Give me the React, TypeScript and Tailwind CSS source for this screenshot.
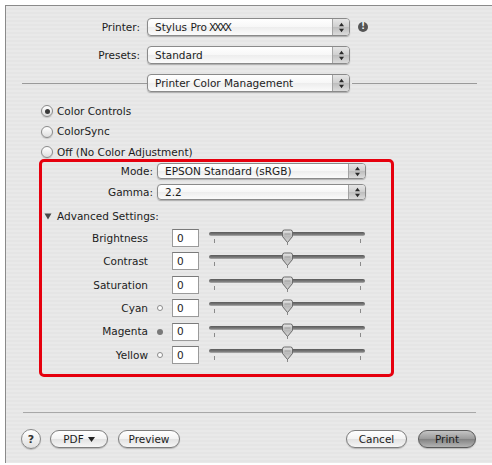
import React from "react";

function Arrows() {
  return (
    <div className="w-[17px] h-full flex items-center justify-center border-l border-[#a4a4a4] rounded-r-[3px] bg-[linear-gradient(to_bottom,#e6e6e6,#cfcfcf_50%,#bdbdbd_51%,#dcdcdc)]">
      <svg width="7" height="11" viewBox="0 0 7 11">
        <path d="M3.5 0.8 L6 4.2 H1 Z" fill="#2a2a2a" />
        <path d="M3.5 10.2 L6 6.8 H1 Z" fill="#2a2a2a" />
      </svg>
    </div>
  );
}

function Popup({ className, children }: { className: string; children: React.ReactNode }) {
  return (
    <div
      className={
        "flex items-stretch rounded-[4px] border border-[#8a8a8a] bg-[linear-gradient(to_bottom,#ffffff,#f7f7f7_50%,#ededed_51%,#fbfbfb)] shadow-[0_1px_1px_rgba(0,0,0,0.25)] " +
        className
      }
    >
      <div className="flex-1 flex items-center pl-[7px] whitespace-nowrap">{children}</div>
      <Arrows />
    </div>
  );
}

function Radio({ on }: { on?: boolean }) {
  return (
    <div className="w-[12px] h-[12px] rounded-full border border-[#8a8a8a] bg-[linear-gradient(to_bottom,#ffffff,#dedede)] shadow-[0_1px_1px_rgba(0,0,0,0.15)] flex items-center justify-center">
      {on && <div className="w-[5px] h-[5px] rounded-full bg-[#3a3a3a]" />}
    </div>
  );
}

function Slider() {
  return (
    <div className="relative w-[156px] h-[18px]">
      <div className="absolute left-0 top-[3px] w-[156px] h-[4px] rounded-full bg-[linear-gradient(to_bottom,#5a5a5a,#7a7a7a_60%,#b0b0b0)]" />
      <div className="absolute left-[5px] top-[10px] w-px h-[4px] bg-[#8a8a8a]" />
      <div className="absolute left-[151px] top-[10px] w-px h-[4px] bg-[#8a8a8a]" />
      <div className="absolute left-[78px] top-[12px] w-px h-[4px] bg-[#8a8a8a]" />
      <svg className="absolute left-[72px] top-0" width="13" height="15" viewBox="0 0 13 15">
        <defs>
          <linearGradient id="thg" x1="0" y1="0" x2="0" y2="1">
            <stop offset="0" stopColor="#e8e8e8" />
            <stop offset="0.5" stopColor="#b8b8b8" />
            <stop offset="1" stopColor="#d8d8d8" />
          </linearGradient>
        </defs>
        <path d="M1.5 3 Q1.5 1 3.5 1 H9.5 Q11.5 1 11.5 3 V7.5 L6.5 13.5 L1.5 7.5 Z" fill="url(#thg)" stroke="#6a6a6a" strokeWidth="1" />
        <path d="M3.5 5 H9.5" stroke="#9a9a9a" strokeWidth="1" />
      </svg>
    </div>
  );
}

function Dot({ kind }: { kind?: "hollow" | "filled" }) {
  if (!kind) return null;
  if (kind === "filled") return <div className="w-[6px] h-[6px] rounded-full bg-[#7a7a7a]" />;
  return <div className="w-[6px] h-[6px] rounded-full border border-[#8a8a8a] bg-white" />;
}

function SliderRow({ label, dot }: { label: string; dot?: "hollow" | "filled" }) {
  return (
    <div className="flex items-center h-[18px]">
      <div className="w-[106px] text-right">{label}</div>
      <div className="w-[24px] flex justify-center">
        <Dot kind={dot} />
      </div>
      <div className="w-[27px] h-[18px] border border-[#9a9a9a] border-t-[#7a7a7a] bg-white pl-[4px] flex items-center">0</div>
      <div className="ml-[10px]">
        <Slider />
      </div>
    </div>
  );
}

function Button({ className, children }: { className: string; children: React.ReactNode }) {
  return (
    <div
      className={
        "h-[18px] rounded-full border flex items-center justify-center shadow-[0_1px_1px_rgba(0,0,0,0.2)] " +
        className
      }
    >
      {children}
    </div>
  );
}

export default function App() {
  return (
    <div className="w-[492px] h-[465px] bg-white pt-[5px] pl-[5px] font-['DejaVu_Sans',sans-serif] text-[10.5px] text-[#1c1c1c] leading-none">
      <div className="w-[487px] h-[458px] border-t border-l border-[#8a8a8a] bg-[repeating-linear-gradient(to_bottom,#e9e9e9_0px,#e9e9e9_2px,#e5e5e5_2px,#e5e5e5_4px)] pt-[12px] flex flex-col">
        <div className="flex flex-col gap-[10px]">
          <div className="flex items-center h-[18px]">
            <div className="w-[134px] text-right">Printer:</div>
            <Popup className="ml-[7px] w-[203px] h-[18px]">
              Stylus Pro<span className="ml-[2px] tracking-[-2px]">XXXX</span>
            </Popup>
            <div className="ml-[8px] w-[10px] h-[10px] rounded-full bg-[#555] text-white text-[8px] font-bold flex items-center justify-center">!</div>
          </div>
          <div className="flex items-center h-[18px]">
            <div className="w-[134px] text-right">Presets:</div>
            <Popup className="ml-[7px] w-[203px] h-[18px]">Standard</Popup>
          </div>
          <div className="flex items-center h-[18px]">
            <div className="ml-[16px] w-[125px] h-px bg-[#9a9a9a]" />
            <Popup className="w-[203px] h-[18px]">Printer Color Management</Popup>
            <div className="ml-[2px] w-[125px] h-px bg-[#9a9a9a]" />
          </div>
        </div>

        <div className="mt-[12px] ml-[35px] flex flex-col gap-[6.5px]">
          <div className="flex items-center h-[14px]">
            <Radio on />
            <span className="ml-[4px]">Color Controls</span>
          </div>
          <div className="flex items-center h-[14px]">
            <Radio />
            <span className="ml-[4px]">ColorSync</span>
          </div>
          <div className="flex items-center h-[14px]">
            <Radio />
            <span className="ml-[4px]">Off (No Color Adjustment)</span>
          </div>
        </div>

        <div className="ml-[33px] w-[355px] h-[218px] border-[3px] border-[#e6000e] rounded-[5px] flex flex-col">
          <div className="mt-[1px] flex items-center h-[16px]">
            <div className="w-[111px] text-right">Mode:</div>
            <Popup className="ml-[4px] w-[209px] h-[16px]">EPSON Standard (sRGB)</Popup>
          </div>
          <div className="mt-[5px] flex items-center h-[16px]">
            <div className="w-[111px] text-right">Gamma:</div>
            <Popup className="ml-[4px] w-[209px] h-[16px]">2.2</Popup>
          </div>
          <div className="mt-[8px] flex items-center h-[16px] pl-[2px]">
            <svg width="8" height="7" viewBox="0 0 8 7">
              <path d="M0.5 0.5 H7.5 L4 6.5 Z" fill="#4a4a4a" />
            </svg>
            <span className="ml-[5px]">Advanced Settings:</span>
          </div>
          <div className="mt-[5px] flex flex-col gap-[5.4px]">
            <SliderRow label="Brightness" />
            <SliderRow label="Contrast" />
            <SliderRow label="Saturation" />
            <SliderRow label="Cyan" dot="hollow" />
            <SliderRow label="Magenta" dot="filled" />
            <SliderRow label="Yellow" dot="hollow" />
          </div>
        </div>

        <div className="mt-[35px] ml-[17px] w-[453px] h-px bg-[#a8a8a8]" />

        <div className="mt-[17px] flex items-center h-[18px]">
          <div className="ml-[15px] w-[20px] h-[20px] rounded-full border border-[#8a8a8a] bg-[linear-gradient(to_bottom,#ffffff,#e0e0e0)] shadow-[0_1px_1px_rgba(0,0,0,0.2)] flex items-center justify-center text-[11px] font-bold text-[#333]">?</div>
          <Button className="ml-[9px] w-[58px] border-[#7d7d7d] bg-[linear-gradient(to_bottom,#ffffff,#f3f3f3_50%,#e2e2e2_51%,#f6f6f6)]">
            PDF
            <svg className="ml-[4px]" width="7" height="5" viewBox="0 0 7 5">
              <path d="M0 0 H7 L3.5 5 Z" fill="#222" />
            </svg>
          </Button>
          <Button className="ml-[10px] w-[62px] border-[#7d7d7d] bg-[linear-gradient(to_bottom,#ffffff,#f3f3f3_50%,#e2e2e2_51%,#f6f6f6)]">
            Preview
          </Button>
          <Button className="ml-[166px] w-[61px] border-[#7d7d7d] bg-[linear-gradient(to_bottom,#ffffff,#f3f3f3_50%,#e2e2e2_51%,#f6f6f6)]">
            Cancel
          </Button>
          <Button className="ml-[11px] w-[58px] border-[#5a5a5a] bg-[linear-gradient(to_bottom,#c4c4c4,#9a9a9a_50%,#828282_51%,#b4b4b4)]">
            Print
          </Button>
        </div>
      </div>
    </div>
  );
}
